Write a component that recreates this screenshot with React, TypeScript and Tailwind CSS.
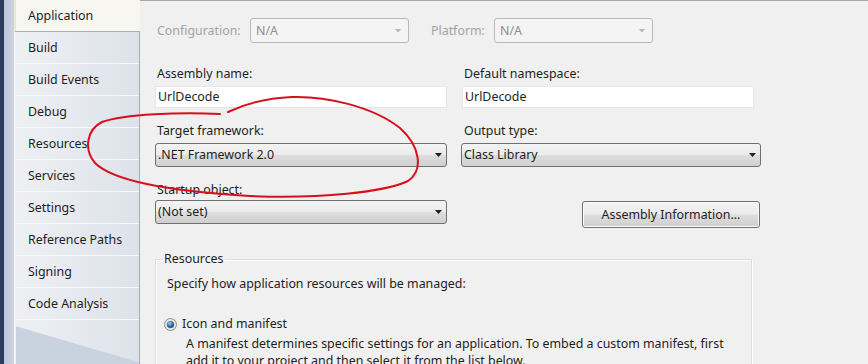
import React from "react";

const TABS = [
  "Build",
  "Build Events",
  "Debug",
  "Resources",
  "Services",
  "Settings",
  "Reference Paths",
  "Signing",
  "Code Analysis",
];

function Arrow({ disabled }: { disabled?: boolean }) {
  return disabled ? (
    <svg width="6" height="4" viewBox="0 0 6 4">
      <polygon points="0,0 6,0 3,3.5" fill="#b4b4b4" />
    </svg>
  ) : (
    <svg width="7" height="4" viewBox="0 0 7 4">
      <polygon points="0,0 7,0 3.5,4" fill="#1e1e1e" />
    </svg>
  );
}

function Combo({ value, className = "", disabled }: { value: string; className?: string; disabled?: boolean }) {
  return (
    <div
      className={`flex items-center justify-between rounded-[3px] border ${
        disabled
          ? "border-[#b5b9bd] bg-[#f4f4f4] pl-[5px] pr-[7px] text-[#8f8f8f]"
          : "border-[#707070] bg-[linear-gradient(#f3f3f3,#ebebeb_48%,#dddddd_52%,#cfcfcf)] pl-[2px] pr-[4px] text-[#1e1e1e]"
      } ${className}`}
    >
      <span>{value}</span>
      <Arrow disabled={disabled} />
    </div>
  );
}

function TextBox({ value, className = "" }: { value: string; className?: string }) {
  return (
    <div className={`flex h-[22px] items-center border border-[#e3e6ea] bg-white pl-[2px] text-[#1e1e1e] ${className}`}>
      {value}
    </div>
  );
}

export default function App() {
  return (
    <div className="relative flex h-[364px] w-[868px] overflow-hidden bg-[#f0f0f0] font-['Noto_Sans',sans-serif] text-[12.4px] leading-[16px] text-[#1e1e1e]">
      {/* window frame */}
      <div className="w-[4px] bg-[#2b3d5f]" />
      <div className="w-[10px] bg-gradient-to-r from-[#b9c5d8] to-[#cdd5e2]" />

      {/* tab column */}
      <div className="flex w-[126px] flex-col">
        <div className="flex h-[31px] items-center border-l-2 border-[#efe6c4] bg-[#f7f6f1] pl-[12px]">Application</div>
        <div className="flex flex-1 flex-col border-r border-t border-[#a9afb9] border-l-2 border-l-[#f3f4f7] bg-gradient-to-r from-[#eef0f3] to-[#dde2ea]">
          {TABS.map((t) => (
            <div key={t} className="flex h-[32px] items-center border-b border-[#f7f8fa] pl-[12px]">
              {t}
            </div>
          ))}
          <div className="relative flex-1 bg-[#c9d2df]">
            <div className="absolute inset-0 bg-gradient-to-r from-[#eef0f3] to-[#dde2ea] [clip-path:polygon(0_0,100%_0,100%_96%,0_14%)]" />
          </div>
        </div>
      </div>

      {/* content */}
      <div className="flex flex-1 flex-col border-t border-[#a8a8a8] pl-[15px]">
        <div className="mt-[17px] flex h-[25px] items-center text-[#a3a3a3]">
          <span className="ml-[2px] w-[93px]">Configuration:</span>
          <Combo value="N/A" disabled className="h-[25px] w-[159px]" />
          <span className="ml-[22px] w-[63px]">Platform:</span>
          <Combo value="N/A" disabled className="h-[25px] w-[159px]" />
        </div>
        <div className="mt-[15px] h-px bg-[#a0a0a0] shadow-[0_1px_0_#fff]" />

        <div className="mt-[8px] grid grid-cols-[292px_300px] gap-x-[14px]">
          <div className="flex flex-col">
            <span className="ml-[2px]">Assembly name:</span>
            <TextBox value="UrlDecode" className="mt-[4px]" />
            <span className="ml-[2px] mt-[15px]">Target framework:</span>
            <Combo value=".NET Framework 2.0" className="mt-[4px] h-[24px]" />
            <span className="ml-[2px] mt-[15px]">Startup object:</span>
            <Combo value="(Not set)" className="mt-[2px] h-[24px]" />
          </div>
          <div className="flex flex-col">
            <span className="ml-[3px]">Default namespace:</span>
            <TextBox value="UrlDecode" className="ml-[1px] mt-[4px] w-[292px]" />
            <span className="ml-[3px] mt-[15px]">Output type:</span>
            <Combo value="Class Library" className="mt-[4px] h-[24px]" />
            <button className="ml-[121px] mt-[34px] h-[27px] w-[178px] rounded-[3px] border border-[#707070] bg-[linear-gradient(#f3f3f3,#ebebeb_48%,#dddddd_52%,#cfcfcf)] text-[#1e1e1e] shadow-[inset_0_0_0_1px_#fcfcfc]">
              Assembly Information...
            </button>
          </div>
        </div>

        <fieldset className="mt-[23px] w-[597px] border border-[#d5dfe5] pb-[20px] pl-[11px] shadow-[inset_1px_1px_0_#fff,1px_1px_0_#fff]">
          <legend className="ml-[-4px] px-[1px]">Resources</legend>
          <div className="mt-[9px]">Specify how application resources will be managed:</div>
          <div className="mt-[24px] flex items-center">
            <svg width="13" height="13" viewBox="0 0 13 13" className="ml-[-3px]">
              <defs>
                <radialGradient id="dot" cx="40%" cy="35%" r="70%">
                  <stop offset="0" stopColor="#9fd2f5" />
                  <stop offset="0.6" stopColor="#2d6fa5" />
                  <stop offset="1" stopColor="#1b3d63" />
                </radialGradient>
              </defs>
              <circle cx="6.5" cy="6.5" r="6" fill="#e4e4e4" stroke="#8c8f94" />
              <circle cx="6.5" cy="6.5" r="3.6" fill="url(#dot)" />
            </svg>
            <span className="ml-[5px]">Icon and manifest</span>
          </div>
          <div className="ml-[19px] mt-[3px] leading-[17px]">
            A manifest determines specific settings for an application. To embed a custom manifest, first
            <br />
            add it to your project and then select it from the list below.
          </div>
        </fieldset>
      </div>

      {/* red hand-drawn annotation */}
      <svg className="pointer-events-none absolute inset-0" width="868" height="364" viewBox="0 0 868 364">
        <path
          d="M 220 114 C 180 112 125 114 102 122 C 86 130 84 150 95 163 C 112 180 165 191 250 196 C 320 199 385 192 408 181 C 424 170 420 146 400 128 C 372 106 325 96 292 97 C 268 98 245 104 228 112"
          fill="none"
          stroke="#d8101c"
          strokeWidth="2"
          strokeLinecap="round"
        />
      </svg>
    </div>
  );
}
